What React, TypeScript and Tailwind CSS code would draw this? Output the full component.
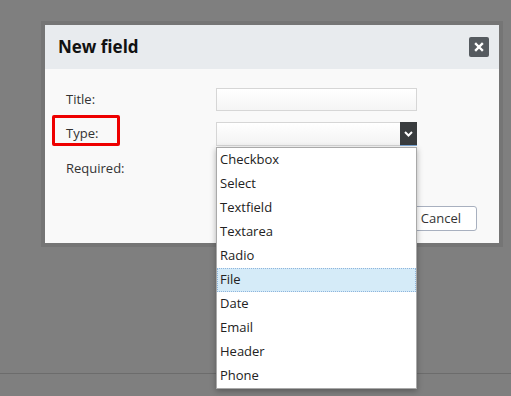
import React from 'react';

const types = ['Checkbox', 'Select', 'Textfield', 'Textarea', 'Radio', 'File', 'Date', 'Email', 'Header', 'Phone'];

export default function App() {
  const selected = 'File';

  return (
    <div className="relative h-[396px] w-full overflow-hidden bg-[#7f7f7f] font-['Open_Sans',sans-serif]">
      {/* page behind the overlay */}
      <div className="h-[374px] border-b border-[#6c6c6c]" />

      {/* Dialog */}
      <div className="absolute left-[45px] top-[25px] w-[454px] bg-[#f9f9f9] shadow-[0_0_0_4px_rgba(0,0,0,0.08)]">
        <div className="flex h-[44px] items-center justify-between bg-[#e8ebee] pl-[13px] pr-[10px]">
          <h2 className="text-[17px] font-bold text-[#111]">New field</h2>
          <button className="flex h-[20px] w-[20px] items-center justify-center rounded-[2px] bg-[#555a5f]">
            <svg width="10" height="10" viewBox="0 0 10 10">
              <path d="M2 2 L8 8 M8 2 L2 8" stroke="white" strokeWidth="2.4" strokeLinecap="square" />
            </svg>
          </button>
        </div>

        <div className="px-[21px] pt-[19px] pb-[12px]">
          <div className="flex flex-col gap-[11px]">
            <div className="flex h-[23px] items-center">
              <span className="w-[150px] text-[13px] text-[#333]">Title:</span>
              <div className="h-[23px] w-[201px] border border-[#d6d6d6] bg-gradient-to-b from-white to-[#f5f5f5]" />
            </div>
            <div className="flex h-[24px] items-center">
              <span className="relative w-[150px] text-[13px] text-[#333]">
                Type:
                <span className="absolute left-[-14px] top-[-9px] h-[31px] w-[68px] rounded-[2px] border-[3px] border-[#ee0000]" />
              </span>
              <div className="relative flex h-[24px] w-[201px] border border-[#d6d6d6] bg-gradient-to-b from-white to-[#f3f3f3]">
                <div className="flex-1" />
                <div className="mt-[-1px] mr-[-1px] flex h-[24px] w-[17px] items-center justify-center border-b border-[#7aa7d6] bg-[#393c3e]">
                  <svg width="9" height="6" viewBox="0 0 9 6">
                    <path d="M1 1 L4.5 4.5 L8 1" stroke="white" strokeWidth="2" fill="none" />
                  </svg>
                </div>

                {/* open list */}
                <ul className="absolute left-[-1px] top-[24px] z-10 w-[201px] border border-[#a9a9a9] bg-white shadow-[0_2px_6px_rgba(0,0,0,0.3)]">
                  {types.map(t => (
                    <li
                      key={t}
                      className={
                        t === selected
                          ? 'flex h-[24px] items-center border border-dotted border-[#8fb5dc] bg-[#d5ebf8] px-[2px] text-[13px] text-[#222]'
                          : 'flex h-[24px] items-center px-[3px] text-[13px] text-[#222]'
                      }
                    >
                      {t}
                    </li>
                  ))}
                </ul>
              </div>
            </div>
            <div className="flex h-[23px] items-center">
              <span className="w-[150px] text-[13px] text-[#333]">Required:</span>
            </div>
          </div>

          <div className="mt-[26px] flex justify-end gap-[8px] pr-[1px]">
            <button className="h-[25px] rounded-[3px] border border-[#a8b0bf] bg-white px-[15px] text-[13px] text-[#333]">Save</button>
            <button className="h-[25px] rounded-[3px] border border-[#a8b0bf] bg-white px-[15px] text-[13px] text-[#333]">Cancel</button>
          </div>
        </div>
      </div>
    </div>
  );
}
